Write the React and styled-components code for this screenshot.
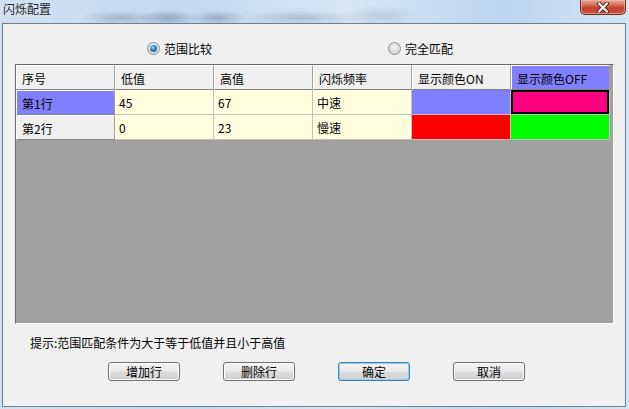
import React from "react";
import styled, { createGlobalStyle, css } from "styled-components";

const Global = createGlobalStyle`
  html, body { margin: 0; padding: 0; }
  body { font-family: "Noto Sans CJK SC", "Noto Sans", sans-serif; font-size: 12px; color: #000; }
`;

const Frame = styled.div`
  width: 629px;
  height: 409px;
  display: flex;
  flex-direction: column;
  box-sizing: border-box;
  background:
    radial-gradient(ellipse 40px 8px at 120px 18px, rgba(90,110,140,0.35), transparent),
    radial-gradient(ellipse 30px 8px at 168px 18px, rgba(70,90,120,0.4), transparent),
    radial-gradient(ellipse 30px 8px at 218px 18px, rgba(70,90,120,0.35), transparent),
    radial-gradient(ellipse 60px 8px at 300px 18px, rgba(90,110,140,0.3), transparent),
    radial-gradient(ellipse 40px 10px at 380px 16px, rgba(120,140,170,0.25), transparent),
    linear-gradient(90deg, #cfe0f2 0%, #c3d9f0 30%, #d6e6f6 55%, #bcd5ee 80%, #d4e5f5 100%);
  overflow: hidden;
`;

const TitleBar = styled.div`
  height: 23px;
  display: flex;
  align-items: flex-start;
  justify-content: space-between;
  padding-left: 3px;
  padding-right: 3px;
  flex: none;
`;

const Title = styled.div`
  font-size: 12px;
  line-height: 18px;
  color: #1a1a2a;
  text-shadow: 0 0 6px rgba(255,255,255,0.9);
`;

const CloseButton = styled.div`
  width: 46px;
  height: 15px;
  box-sizing: border-box;
  border: 1px solid #6b2a22;
  border-top: none;
  border-radius: 0 0 5px 5px;
  background: linear-gradient(#e9a99c 0%, #d7715f 35%, #c4402c 55%, #c9553f 100%);
  box-shadow: inset 0 0 0 1px rgba(255,190,170,0.6);
  display: flex;
  align-items: center;
  justify-content: center;
`;

const Client = styled.div`
  flex: 1;
  margin: 0 3px 2px 2px;
  border: 1px solid #6f7f90;
  background: #f0f0f0;
  display: flex;
  flex-direction: column;
  min-height: 0;
`;

const RadioRow = styled.div`
  display: flex;
  align-items: center;
  height: 16px;
  margin-top: 16px;
  padding-left: 144px;
`;

const RadioLabel = styled.label`
  display: flex;
  align-items: center;
  gap: 4px;
  margin-right: ${(p) => p.$gap || 0}px;
`;

const RadioDot = styled.span`
  width: 11px;
  height: 11px;
  border-radius: 50%;
  border: 1px solid #8c8f94;
  box-sizing: content-box;
  background: radial-gradient(circle at 50% 40%, #f4f4f4 0%, #d8d8d8 65%, #c4c4c4 100%);
  display: inline-flex;
  align-items: center;
  justify-content: center;
  ${(p) =>
    p.$checked &&
    css`
      &::after {
        content: "";
        width: 7px;
        height: 7px;
        border-radius: 50%;
        background: radial-gradient(circle at 40% 35%, #a9dcff 0%, #2a8ad8 40%, #0e4f93 100%);
      }
    `}
`;

const GridBox = styled.div`
  margin-top: 8px;
  margin-left: 12px;
  width: 599px;
  height: 260px;
  box-sizing: border-box;
  background: #a0a0a0;
  border-top: 1px solid #696969;
  border-left: 1px solid #696969;
  border-right: 1px solid #ffffff;
  border-bottom: 1px solid #ffffff;
`;

const Table = styled.div`
  display: grid;
  grid-template-columns: repeat(6, 99px);
  grid-auto-rows: 25px;
`;

const Cell = styled.div`
  box-sizing: border-box;
  display: flex;
  align-items: center;
  padding-left: ${(p) => (p.$kind === "data" ? 4 : 5)}px;
  padding-top: 1px;
  font-size: 12px;
  white-space: nowrap;
  ${(p) =>
    p.$kind === "header"
      ? css`
          background: ${p.$bg || "#f0f0f0"};
          border-top: 1px solid #ffffff;
          border-left: 1px solid #ffffff;
          border-right: 1px solid #a0a0a0;
          border-bottom: 1px solid #808080;
        `
      : css`
          background: ${p.$bg || "#ffffe0"};
          border-right: 1px solid #c0c0c0;
          border-bottom: 1px solid #c0c0c0;
        `}
  ${(p) =>
    p.$current &&
    css`
      box-shadow: inset 0 0 0 2px #000;
    `}
`;

const Hint = styled.div`
  margin-top: 11px;
  padding-left: 27px;
  height: 16px;
  line-height: 16px;
  font-size: 12px;
`;

const ButtonRow = styled.div`
  margin-top: 11px;
  padding-left: 105px;
  display: flex;
  gap: 43px;
`;

const Button = styled.div`
  width: 72px;
  height: 19px;
  box-sizing: border-box;
  border: 1px solid ${(p) => (p.$default ? "#3c7fb1" : "#707070")};
  border-radius: 3px;
  background: linear-gradient(#f2f2f2 0%, #ebebeb 48%, #dddddd 52%, #cfcfcf 100%);
  box-shadow: inset 0 0 0 1px ${(p) => (p.$default ? "#8fd3f5" : "#fcfcfc")};
  display: flex;
  align-items: center;
  justify-content: center;
  font-size: 12px;
  line-height: 1;
`;

const headers = ["序号", "低值", "高值", "闪烁频率", "显示颜色ON", "显示颜色OFF"];
const rows = [
  { name: "第1行", low: "45", high: "67", freq: "中速", on: "#8080ff", off: "#ff0080", selected: true },
  { name: "第2行", low: "0", high: "23", freq: "慢速", on: "#ff0000", off: "#00ff00" },
];

export default function App() {
  return (
    <>
      <Global />
      <Frame>
        <TitleBar>
          <Title>闪烁配置</Title>
          <CloseButton>
            <svg width="14" height="11" viewBox="0 0 14 11">
              <path d="M3 1.5 L11 9.5 M11 1.5 L3 9.5" stroke="#5a1e16" strokeWidth="4" strokeLinecap="round" />
              <path d="M3 1.5 L11 9.5 M11 1.5 L3 9.5" stroke="#ffffff" strokeWidth="2.2" strokeLinecap="round" />
            </svg>
          </CloseButton>
        </TitleBar>
        <Client>
          <RadioRow>
            <RadioLabel $gap={176}>
              <RadioDot $checked />
              范围比较
            </RadioLabel>
            <RadioLabel>
              <RadioDot />
              完全匹配
            </RadioLabel>
          </RadioRow>
          <GridBox>
            <Table>
              {headers.map((h, i) => (
                <Cell key={h} $kind="header" $bg={i === 5 ? "#8080ff" : undefined}>
                  {h}
                </Cell>
              ))}
              {rows.map((r) => (
                <React.Fragment key={r.name}>
                  <Cell $kind="header" $bg={r.selected ? "#8080ff" : undefined}>{r.name}</Cell>
                  <Cell $kind="data">{r.low}</Cell>
                  <Cell $kind="data">{r.high}</Cell>
                  <Cell $kind="data">{r.freq}</Cell>
                  <Cell $kind="data" $bg={r.on} />
                  <Cell $kind="data" $bg={r.off} $current={r.selected} />
                </React.Fragment>
              ))}
            </Table>
          </GridBox>
          <Hint>提示:范围匹配条件为大于等于低值并且小于高值</Hint>
          <ButtonRow>
            <Button>增加行</Button>
            <Button>删除行</Button>
            <Button $default>确定</Button>
            <Button>取消</Button>
          </ButtonRow>
        </Client>
      </Frame>
    </>
  );
}
